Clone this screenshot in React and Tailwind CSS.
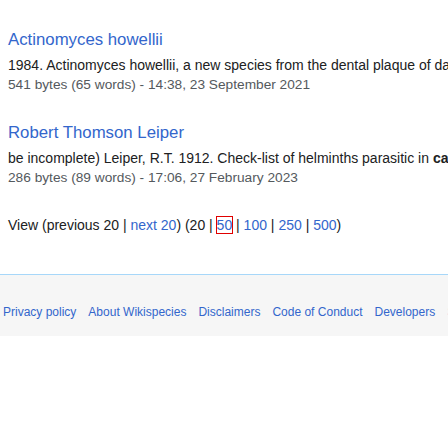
import React from 'react';

const results = [
  {
    title: 'Actinomyces howellii',
    snippet: <>1984. Actinomyces howellii, a new species from the dental plaque of dairy cattle. International Journal of Systematic Bacteriology</>,
    meta: '541 bytes (65 words) - 14:38, 23 September 2021',
  },
  {
    title: 'Robert Thomson Leiper',
    snippet: <>be incomplete) Leiper, R.T. 1912. Check-list of helminths parasitic in <b>cattle</b>. Journal of Tropical Veterinary Science</>,
    meta: '286 bytes (89 words) - 17:06, 27 February 2023',
  },
];

const footerLinks = ['Privacy policy', 'About Wikispecies', 'Disclaimers', 'Code of Conduct', 'Developers', 'Statistics'];

const Sep = () => <span className="text-[#202122]"> | </span>;

export default function App() {
  return (
    <div className="w-[448px] h-[448px] overflow-hidden bg-white font-['Liberation_Sans',Arial,sans-serif]">
      <div className="pl-2 pt-[30px]">
        {results.map((r, i) => (
          <div key={r.title} className={i > 0 ? 'mt-[28px]' : ''}>
            <div className="text-[16.8px] leading-5 text-[#3366cc]">{r.title}</div>
            <div className="mt-[5px] text-[14px] leading-5 text-[#202122] whitespace-nowrap">{r.snippet}</div>
            <div className="text-[13.7px] leading-5 text-[#54595d] whitespace-nowrap">{r.meta}</div>
          </div>
        ))}
        <div className="mt-[27px] text-[14px] leading-5 text-[#202122] whitespace-nowrap">
          View (previous 20<Sep /><span className="text-[#3366cc]">next 20</span>) (20<Sep />
          <span className="outline outline-1 outline-[#e00000] text-[#3366cc]">50</span>
          <Sep /><span className="text-[#3366cc]">100</span><Sep /><span className="text-[#3366cc]">250</span><Sep />
          <span className="text-[#3366cc]">500</span>)
        </div>
      </div>
      <div className="mt-[39px] h-[62px] border-t border-[#a7d7f9] bg-[#f6f6f6] pl-[3px] pt-[29px] flex gap-[12px] whitespace-nowrap text-[12px] leading-4 text-[#3366cc]">
        {footerLinks.map((l) => (
          <span key={l}>{l}</span>
        ))}
      </div>
    </div>
  );
}
